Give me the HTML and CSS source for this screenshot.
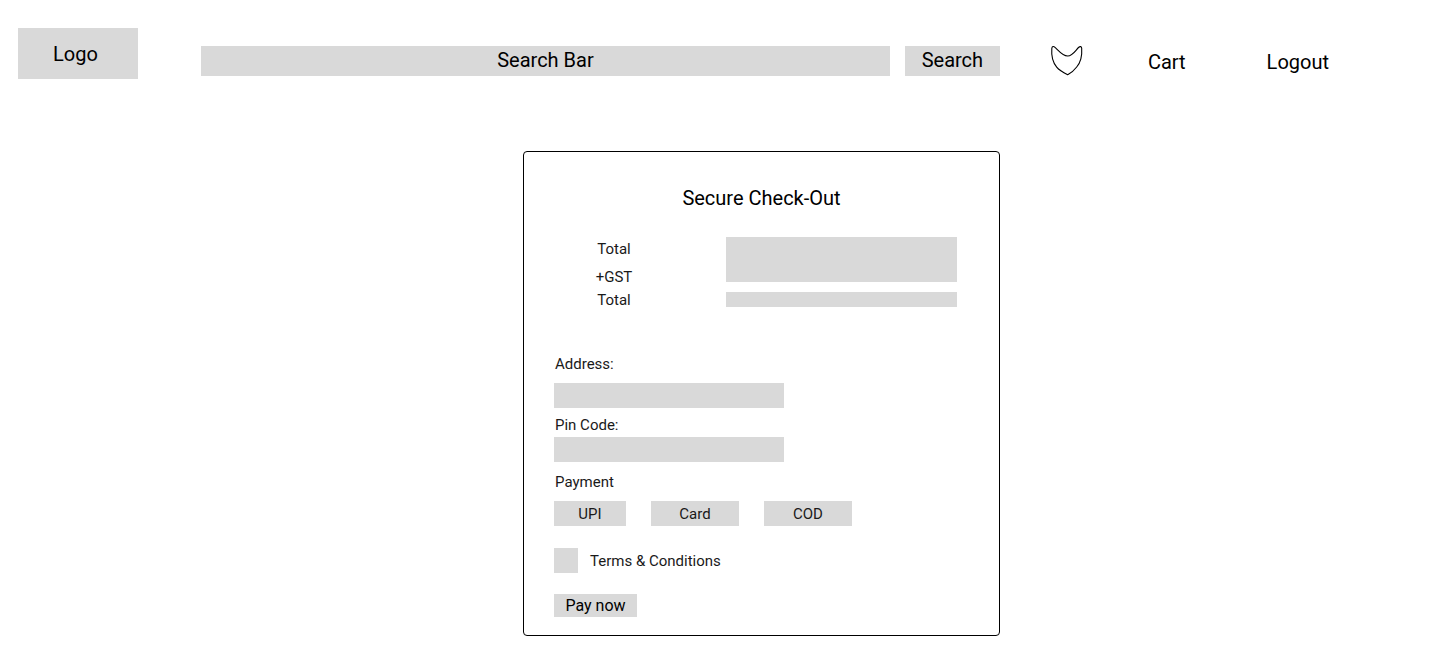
FILE: index.html
```html
<!DOCTYPE html>
<html lang="en">
<head>
<meta charset="utf-8">
<meta name="viewport" content="width=device-width, initial-scale=1">
<title>Secure Check-Out</title>
<link rel="stylesheet" href="styles.css">
</head>
<body>
<header class="header">
  <a class="logo" href="#">Logo</a>
  <form class="search">
    <input class="search-input" type="text" placeholder="Search Bar" aria-label="Search Bar">
    <button class="search-button" type="submit">Search</button>
  </form>
  <nav class="nav">
    <a class="wishlist" href="#" aria-label="Wishlist">
      <svg class="heart" viewBox="0 0 34 32" width="34" height="32" fill="none" stroke="#000" stroke-width="1.1" aria-hidden="true">
        <path d="M17.7 29.7C12 27 8.500 24.500 6.700 22.200C2.500 17 1.300 10 1.800 3.500C2 1 3.600 1 5 2.300C8 5 12.500 11 17.700 11C22.500 11 25.500 5.500 28.500 2.500C30 1.100 31.600 1.300 31.700 3.300C32.200 11 31.500 16.500 26.700 22C24.500 25 21 28 17.700 29.700Z"/>
      </svg>
    </a>
    <a class="nav-link cart" href="#">Cart</a>
    <a class="nav-link" href="#">Logout</a>
  </nav>
</header>
<main class="main">
  <form class="checkout">
    <h1 class="title">Secure Check-Out</h1>
    <section class="summary">
      <div class="summary-labels">
        <span class="summary-item">Total</span>
        <span>+GST</span>
        <span>Total</span>
      </div>
      <div class="summary-values">
        <output class="amount" aria-label="Total and GST"></output>
        <output class="grand-total" aria-label="Total"></output>
      </div>
    </section>
    <div class="field">
      <label class="label address-label" for="address">Address:</label>
      <input class="text-input" id="address" type="text">
    </div>
    <div class="field pin">
      <label class="label pin-label" for="pin">Pin Code:</label>
      <input class="text-input" id="pin" type="text">
    </div>
    <div class="payment" role="group" aria-labelledby="payment-label">
      <span class="label" id="payment-label">Payment</span>
      <div class="methods">
        <button class="method upi" type="button">UPI</button>
        <button class="method" type="button">Card</button>
        <button class="method" type="button">COD</button>
      </div>
    </div>
    <div class="terms">
      <input class="checkbox" id="terms" type="checkbox">
      <label for="terms">Terms &amp; Conditions</label>
    </div>
    <button class="pay" type="submit">Pay now</button>
  </form>
</main>
</body>
</html>
```
FILE: styles.css
```css
* {
  box-sizing: border-box;
}

body {
  margin: 0;
  background: #fff;
  color: #000;
  font-family: Roboto, sans-serif;
  font-size: 20px;
  line-height: 24px;
}

a {
  color: inherit;
  text-decoration: none;
}

button,
input {
  margin: 0;
  padding: 0;
  border: 0;
  border-radius: 0;
  background: #d9d9d9;
  color: inherit;
  font: inherit;
}

.header {
  display: flex;
  align-items: flex-start;
  padding: 28px 18px 0;
}

.logo {
  width: 120px;
  padding: 14px 0 13px;
  margin-right: 63px;
  background: #d9d9d9;
  text-align: center;
  text-indent: -5px;
}

.search {
  display: flex;
  flex: 1;
  gap: 15px;
  padding-top: 18px;
}

.search-input {
  flex: 1;
  min-width: 0;
  height: 30px;
  padding-bottom: 2px;
  text-align: center;
}

.search-input::placeholder {
  color: #000;
  opacity: 1;
}

.search-button {
  width: 95px;
  height: 30px;
  padding-bottom: 2px;
}

.nav {
  display: flex;
  align-items: center;
  padding: 17px 98px 0 50px;
}

.heart {
  display: block;
}

.cart {
  margin: 0 81px 0 64px;
}

.nav-link {
  padding-top: 2px;
}

.main {
  display: flex;
  justify-content: center;
  padding: 72px 0 32px 78px;
}

.checkout {
  width: 477px;
  max-width: 100%;
  padding: 34px 42px 18px 30px;
  border: 1px solid #000;
  border-radius: 4px;
  color: #1a1a1a;
  font-size: 15px;
  line-height: 18px;
}

.title {
  margin: 0 -12px 27px 0;
  color: #000;
  font-size: 20px;
  font-weight: 400;
  line-height: 24px;
  text-align: center;
}

.summary {
  display: flex;
  gap: 52px;
  margin-bottom: 46px;
}

.summary-labels {
  display: flex;
  flex-direction: column;
  gap: 5px;
  width: 120px;
  padding-top: 3px;
  text-align: center;
}

.summary-item {
  margin-bottom: 5px;
}

.summary-values {
  display: flex;
  flex: 1;
  flex-direction: column;
  gap: 10px;
}

.amount {
  height: 45px;
  background: #d9d9d9;
}

.grand-total {
  height: 15px;
  background: #d9d9d9;
}

.field {
  display: flex;
  flex-direction: column;
}

.label {
  padding-left: 1px;
}

.address-label {
  margin-bottom: 10px;
}

.pin {
  margin-top: 8px;
}

.pin-label {
  margin-bottom: 3px;
}

.text-input {
  width: 230px;
  height: 25px;
  padding: 0 6px;
}

.payment {
  margin-top: 11px;
}

.methods {
  display: flex;
  gap: 25px;
  margin-top: 10px;
}

.method {
  width: 88px;
  height: 25px;
}

.upi {
  width: 72px;
}

.terms {
  display: flex;
  align-items: center;
  gap: 12px;
  margin: 22px 0 21px;
}

.checkbox {
  width: 24px;
  height: 25px;
  appearance: none;
}

.checkbox:checked {
  box-shadow: inset 0 0 0 6px #d9d9d9;
  background: #1a1a1a;
}

.pay {
  display: block;
  width: 83px;
  height: 23px;
  color: #000;
  font-size: 16px;
}
```
